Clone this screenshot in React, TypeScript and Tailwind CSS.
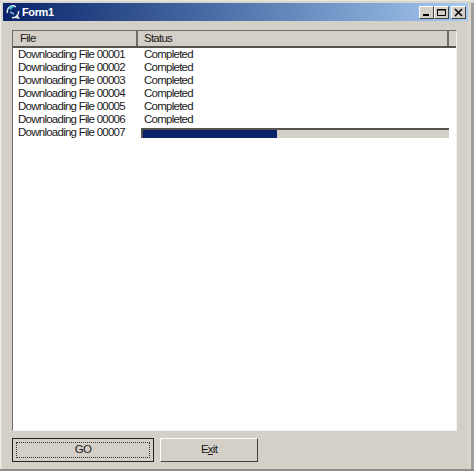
const rows = [
  'Downloading File 00001',
  'Downloading File 00002',
  'Downloading File 00003',
  'Downloading File 00004',
  'Downloading File 00005',
  'Downloading File 00006',
  'Downloading File 00007',
];

function CaptionButton({ children, className = '' }: { children: React.ReactNode; className?: string }) {
  return (
    <div className={`w-[15px] h-[13px] bg-[#d4d0c8] border border-t-white border-l-white border-r-[#404040] border-b-[#404040] flex items-center justify-center ${className}`}>
      <svg width="11" height="9" viewBox="0 0 11 9">{children}</svg>
    </div>
  );
}

export default function App() {
  return (
    <div className="w-[474px] h-[471px] bg-[#d4d0c8] flex flex-col font-['Liberation_Sans',sans-serif] text-[11.5px] tracking-[-0.75px] text-[#1a1a1a] overflow-hidden">
      <div className="h-[3px] bg-[#d8d5cd] border-t border-[#e8e6e0]" />
      <div className="flex flex-1 min-h-0">
        <div className="w-[3px] bg-[#d8d5cd] border-l border-[#eeeeea]" />
        <div className="flex-1 flex flex-col min-w-0">
          {/* title bar */}
          <div className="h-[18px] bg-gradient-to-r from-[#0a246a] to-[#a6caf0] flex items-center pl-[2px] pr-[2px]">
            <svg width="16" height="16" viewBox="0 0 16 16" fill="none">
              <path d="M2.5 9 A5.5 5.5 0 0 1 11 3" stroke="#e4eaf0" strokeWidth="1.5" />
              <path d="M13.5 7 A5.5 5.5 0 0 1 7 13.5" stroke="#e4eaf0" strokeWidth="1.5" />
              <path d="M4 2 L9 3 L5 6 Z" fill="#39c6d8" />
              <path d="M15 15 L10 14 L12 10 Z" fill="#e8e8e8" />
              <path d="M5 8 L9 10" stroke="#7fb1d9" strokeWidth="1.4" />
            </svg>
            <span className="ml-[1px] text-white font-bold text-[11px] tracking-[-0.4px] leading-none">Form1</span>
            <div className="ml-auto flex items-center">
              <CaptionButton>
                <rect x="2" y="6" width="6" height="2" fill="#000" />
              </CaptionButton>
              <CaptionButton className="mr-[2px]">
                <path d="M1.5 1.5 H9.5 V7.5 H1.5 Z M1 2 H10" fill="none" stroke="#000" />
              </CaptionButton>
              <CaptionButton>
                <path d="M2 1 L9 8 M9 1 L2 8" stroke="#000" strokeWidth="1.5" />
              </CaptionButton>
            </div>
          </div>

          {/* client area */}
          <div className="flex-1 flex flex-col pt-[9px] pl-[9px] pr-[11px] min-h-0">
            <div className="h-[401px] bg-white border border-t-[#6e6c66] border-l-[#6e6c66] border-r-[#f4f3f0] border-b-[#f4f3f0] flex flex-col">
              <div className="flex h-[17px] bg-[#d4d0c8] border-b-2 border-[#55534e] leading-[15px]">
                <div className="w-[125px] pl-[7px] border-r-2 border-[#6e6c66]">File</div>
                <div className="w-[311px] pl-[6px] border-r-2 border-[#6e6c66]">Status</div>
                <div className="flex-1" />
              </div>
              <div className="flex-1">
                {rows.map((name, i) => (
                  <div key={name} className="flex h-[13px] items-center leading-[13px]">
                    <div className="w-[127px] pl-[5px] whitespace-nowrap">{name}</div>
                    {i < 6 ? (
                      <div className="pl-[4px]">Completed</div>
                    ) : (
                      <div className="w-[308px] h-[10px] ml-[1px] bg-[#d4d0c8] border-t-2 border-l-2 border-t-[#55534e] border-l-[#55534e]">
                        <div className="w-[134px] h-full bg-[#0a246a]" />
                      </div>
                    )}
                  </div>
                ))}
              </div>
            </div>

            {/* buttons */}
            <div className="flex gap-[6px] mt-[7px]">
              <button className="w-[142px] h-[24px] border border-[#222] bg-[#d4d0c8] p-[3px]">
                <div className="h-full border border-dotted border-[#333] flex items-center justify-center">GO</div>
              </button>
              <button className="w-[98px] h-[24px] bg-[#d4d0c8] border border-t-white border-l-white border-r-[#404040] border-b-[#404040] flex items-center justify-center">
                <span>E<span className="underline">x</span>it</span>
              </button>
            </div>
          </div>
        </div>
        <div className="w-[6px] bg-[#d8d5cd] border-r-[3px] border-[#a09e98]" />
      </div>
      <div className="h-[2px] bg-[#8f8d87]" />
    </div>
  );
}
